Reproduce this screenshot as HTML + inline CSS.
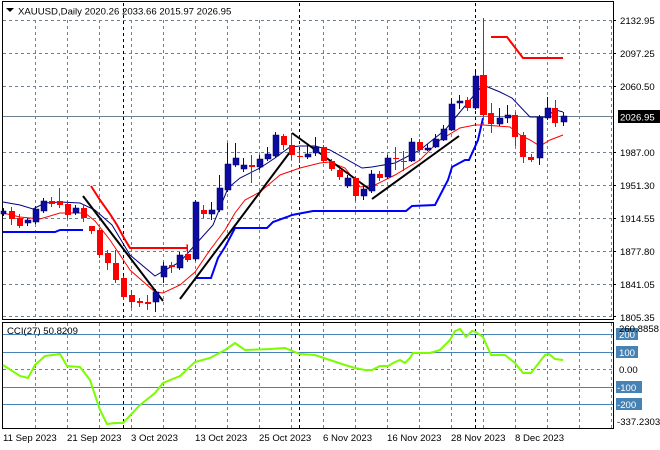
<!DOCTYPE html>
<html><head><meta charset="utf-8"><style>
body{margin:0;background:#fff;width:660px;height:450px;overflow:hidden}
svg{display:block}
text{font-family:"Liberation Sans",sans-serif;font-size:9.6px;fill:#000}
</style></head><body>
<svg width="660" height="450" viewBox="0 0 660 450" xmlns="http://www.w3.org/2000/svg">
<rect width="660" height="450" fill="#fff"/>
<g stroke="#708090" stroke-dasharray="3,3" stroke-width="1">
<path d="M35.5 20V319M67.5 20V319M99.5 20V319M131.5 20V319M163.5 20V319M195.5 20V319M227.5 20V319M259.5 20V319M291.5 20V319M323.5 20V319M355.5 20V319M387.5 20V319M419.5 20V319M451.5 20V319M483.5 20V319M515.5 20V319M547.5 20V319M579.5 20V319M611.5 20V319"/>
<path d="M35.5 323V428M67.5 323V428M99.5 323V428M131.5 323V428M163.5 323V428M195.5 323V428M227.5 323V428M259.5 323V428M291.5 323V428M323.5 323V428M355.5 323V428M387.5 323V428M419.5 323V428M451.5 323V428M483.5 323V428M515.5 323V428M547.5 323V428M579.5 323V428M611.5 323V428"/>
<path d="M3 20.5H613M3 53.5H613M3 86.5H613M3 152.5H613M3 185.5H613M3 218.5H613M3 251.5H613M3 284.5H613M3 316.5H613M3 369.5H613"/>
</g>
<g stroke="#000" stroke-dasharray="3,3" stroke-width="1">
<path d="M123.5 3V319M299.5 3V319M475.5 3V319M123.5 323V428M299.5 323V428M475.5 323V428"/>
</g>
<path d="M3 116.5H613" stroke="#708090"/>
<g stroke="#4682b4"><path d="M3 334.5H613M3 352.5H613M3 387.5H613M3 404.5H613"/></g>
<rect x="2.5" y="1.5" width="611" height="318" fill="none" stroke="#000"/>
<rect x="2.5" y="322.5" width="611" height="106" fill="none" stroke="#000"/>
<g stroke="#000"><path d="M613 20.5h3M613 53.5h3M613 86.5h3M613 152.5h3M613 185.5h3M613 218.5h3M613 251.5h3M613 284.5h3M613 316.5h3"/></g>

<polyline fill="none" stroke="#0000ff" stroke-width="2" points="3,232 55,232 60,230 83,230"/>
<polyline fill="none" stroke="#0000ff" stroke-width="2" points="196,278 211,278 218,258 225,247 235,228 267,228 273,222 287,217 292,215 313,211 406,211 412,206 435,205 448,180 452,167 465,160 469,160 478,140 483,118"/>
<polyline fill="none" stroke="#ff0000" stroke-width="2" points="91,186 100,200 110,214 117,225 124,238 130,248 187,248"/>
<path d="M187 244V251" stroke="#ff0000" stroke-width="1"/>
<polyline fill="none" stroke="#ff0000" stroke-width="2" points="491,37 507,37 523,58 563,58"/>
<polyline fill="none" stroke="#000080" stroke-width="1" points="3,202 20,205 33,209 45,203 60,202 80,203 95,210 112,225 130,255 155,276 165,270 180,262 195,245 213,225 228,188 240,178 260,168 275,158 290,147 300,146 315,146 330,150 362,168 372,167 395,163 420,150 445,130 470,100 483,85 500,92 512,98 530,117 545,117 556,110 563,112"/>
<polyline fill="none" stroke="#ff0000" stroke-width="1" points="3,213 20,217 40,219 60,213 85,213 95,221 110,240 130,270 155,292 163,293 180,285 195,272 210,250 225,230 235,213 245,200 260,192 280,175 300,168 320,163 330,162 345,168 360,187 375,185 395,175 420,160 440,140 460,128 475,125 483,125 510,127 520,135 530,140 540,146 550,140 563,135"/>
<g stroke="#000" stroke-width="2" fill="none">
<path d="M83 196L163 301"/>
<path d="M180 299L290 152"/>
<path d="M292 133L372 191"/>
<path d="M372 199L459 136"/>
</g>
<g stroke-width="1">
<g stroke="#ff0000">
<path d="M11.5 207V225M19.5 214V228M51.5 197V207M59.5 188V208M67.5 201V219M83.5 204V222M91.5 226V234M99.5 228V258M107.5 250V270M115.5 250V283M123.5 276V300M131.5 290V308M139.5 298V307M147.5 295V310M171.5 262V273M187.5 245V262M203.5 205V218M251.5 155V183M283.5 134V150M291.5 133V160M299.5 150V163M323.5 145V163M331.5 159V171M339.5 168V180M355.5 176V201M379.5 171V181M395.5 147V170M403.5 151V171M419.5 139V152M467.5 97V111M483.5 18V120M491.5 103V133M515.5 112V146M523.5 132V163M531.5 154V162M555.5 100V127"/>
</g>
<g stroke="#0000a0">
<path d="M3.5 208V216M27.5 218V226M35.5 206V224M43.5 198V213M75.5 205V215M155.5 289V312M163.5 262V283M179.5 252V270M195.5 200V261M211.5 202V220M219.5 175V212M227.5 143V192M235.5 143V167M243.5 158V172M259.5 155V170M267.5 147V161M275.5 132V158M307.5 145V159M315.5 137V156M347.5 175V188M363.5 186V200M371.5 170V193M387.5 155V179M411.5 138V162M427.5 144V151M435.5 134V148M443.5 125V141M451.5 98V131M459.5 95V109M475.5 72V110M499.5 108V126M507.5 105V123M539.5 115V165M547.5 97V120M563.5 112V126"/>
</g>
</g>
<g fill="#ff0000">
<rect x="9" y="211" width="6" height="8"/><rect x="17" y="218" width="6" height="8"/>
<rect x="49" y="201" width="6" height="3"/><rect x="57" y="201" width="6" height="4"/>
<rect x="65" y="204" width="6" height="11"/><rect x="81" y="208" width="6" height="10"/>
<rect x="89" y="226" width="6" height="5"/><rect x="97" y="230" width="6" height="25"/>
<rect x="105" y="253" width="6" height="10"/><rect x="113" y="263" width="6" height="17"/>
<rect x="121" y="278" width="6" height="19"/><rect x="129" y="295" width="6" height="7"/>
<rect x="137" y="301" width="6" height="2"/><rect x="145" y="302" width="6" height="2"/>
<rect x="169" y="265" width="6" height="2"/><rect x="185" y="254" width="6" height="6"/>
<rect x="201" y="210" width="6" height="4"/><rect x="249" y="165" width="6" height="2"/>
<rect x="281" y="136" width="6" height="9"/><rect x="289" y="145" width="6" height="10"/>
<rect x="297" y="156" width="6" height="1"/><rect x="321" y="147" width="6" height="14"/>
<rect x="329" y="161" width="6" height="8"/><rect x="337" y="170" width="6" height="7"/>
<rect x="353" y="178" width="6" height="18"/><rect x="377" y="174" width="6" height="4"/>
<rect x="393" y="158" width="6" height="1"/><rect x="401" y="161" width="6" height="1"/>
<rect x="417" y="142" width="6" height="8"/><rect x="465" y="100" width="6" height="8"/>
<rect x="480" y="75" width="7" height="40"/><rect x="488" y="113" width="6" height="11"/>
<rect x="512" y="115" width="6" height="22"/><rect x="520" y="135" width="6" height="22"/>
<rect x="528" y="157" width="6" height="3"/><rect x="552" y="108" width="6" height="15"/>
</g>
<g fill="#0c0ca0" stroke="#000060" stroke-width="0.5">
<rect x="1" y="211" width="5" height="3"/><rect x="25" y="220" width="6" height="3"/>
<rect x="33" y="209" width="6" height="13"/><rect x="41" y="201" width="6" height="10"/>
<rect x="73" y="208" width="6" height="5"/><rect x="153" y="292" width="6" height="10"/>
<rect x="161" y="266" width="6" height="11"/><rect x="177" y="255" width="6" height="13"/>
<rect x="193" y="202" width="6" height="57"/><rect x="209" y="210" width="6" height="4"/>
<rect x="217" y="188" width="6" height="22"/><rect x="225" y="164" width="6" height="26"/>
<rect x="233" y="158" width="6" height="7"/><rect x="241" y="165" width="6" height="4"/>
<rect x="257" y="159" width="6" height="8"/><rect x="265" y="154" width="6" height="5"/>
<rect x="273" y="135" width="6" height="21"/><rect x="305" y="154" width="6" height="3"/>
<rect x="313" y="147" width="6" height="6"/><rect x="345" y="178" width="6" height="8"/>
<rect x="361" y="189" width="6" height="7"/><rect x="369" y="174" width="6" height="17"/>
<rect x="385" y="158" width="6" height="19"/><rect x="409" y="142" width="6" height="19"/>
<rect x="425" y="148" width="6" height="2"/><rect x="433" y="139" width="6" height="8"/>
<rect x="441" y="129" width="6" height="11"/><rect x="449" y="104" width="6" height="26"/>
<rect x="457" y="101" width="6" height="2"/><rect x="473" y="76" width="6" height="32"/>
<rect x="497" y="118" width="6" height="6"/><rect x="505" y="115" width="6" height="3"/>
<rect x="537" y="117" width="6" height="41"/><rect x="545" y="108" width="6" height="10"/>
<rect x="561" y="116" width="6" height="6"/>
</g>

<polyline fill="none" stroke="#7cfc00" stroke-width="2" points="3,365 20,376 28,378 35,365 45,356 60,354 67,366 80,367 90,380 100,410 107,424 115,423 123,423 140,405 155,393 163,383 180,376 195,362 210,358 225,350 235,343 245,350 270,349 285,348 300,354 315,355 330,360 345,365 355,368 365,370 372,370 380,366 388,366 395,362 400,360 405,363 410,358 413,353 420,353 430,353 440,350 450,340 455,331 460,329 466,337 472,331 476,332 483,337 491,355 505,355 515,363 523,373 531,373 545,355 549,354 555,359 563,360"/>

<path d="M6 8h8l-4 4z" fill="#000"/>
<text x="18" y="14.5">XAUUSD,Daily  2020.26 2033.66 2015.97 2026.95</text>
<text x="7" y="334">CCI(27) 50.8209</text>
<g>
<text x="620" y="24">2132.95</text>
<text x="620" y="57">2097.25</text>
<text x="620" y="90">2060.50</text>
<rect x="618" y="110" width="42" height="13" fill="#000"/>
<text x="620" y="120.5" style="fill:#fff">2026.95</text>
<text x="620" y="156">1987.00</text>
<text x="620" y="189">1951.30</text>
<text x="620" y="222">1914.55</text>
<text x="620" y="255">1877.80</text>
<text x="620" y="288">1841.05</text>
<text x="620" y="321">1805.35</text>
<rect x="616" y="328" width="22" height="12" fill="#4682b4"/>
<rect x="616" y="346" width="22" height="12" fill="#4682b4"/>
<rect x="616" y="381" width="26" height="12" fill="#4682b4"/>
<rect x="616" y="398" width="26" height="12" fill="#4682b4"/>
<text x="619" y="338" style="fill:#fff">200</text>
<text x="619" y="356" style="fill:#fff">100</text>
<text x="619" y="332">260.8858</text>
<text x="619" y="373">0.00</text>
<text x="617" y="391" style="fill:#fff">-100</text>
<text x="617" y="408" style="fill:#fff">-200</text>
<text x="617" y="425">-337.2303</text>
</g>
<g>
<text x="3" y="441">11 Sep 2023</text>
<text x="67" y="441">21 Sep 2023</text>
<text x="131" y="441">3 Oct 2023</text>
<text x="195" y="441">13 Oct 2023</text>
<text x="259" y="441">25 Oct 2023</text>
<text x="323" y="441">6 Nov 2023</text>
<text x="387" y="441">16 Nov 2023</text>
<text x="451" y="441">28 Nov 2023</text>
<text x="515" y="441">8 Dec 2023</text>
</g>
</svg>
</body></html>
